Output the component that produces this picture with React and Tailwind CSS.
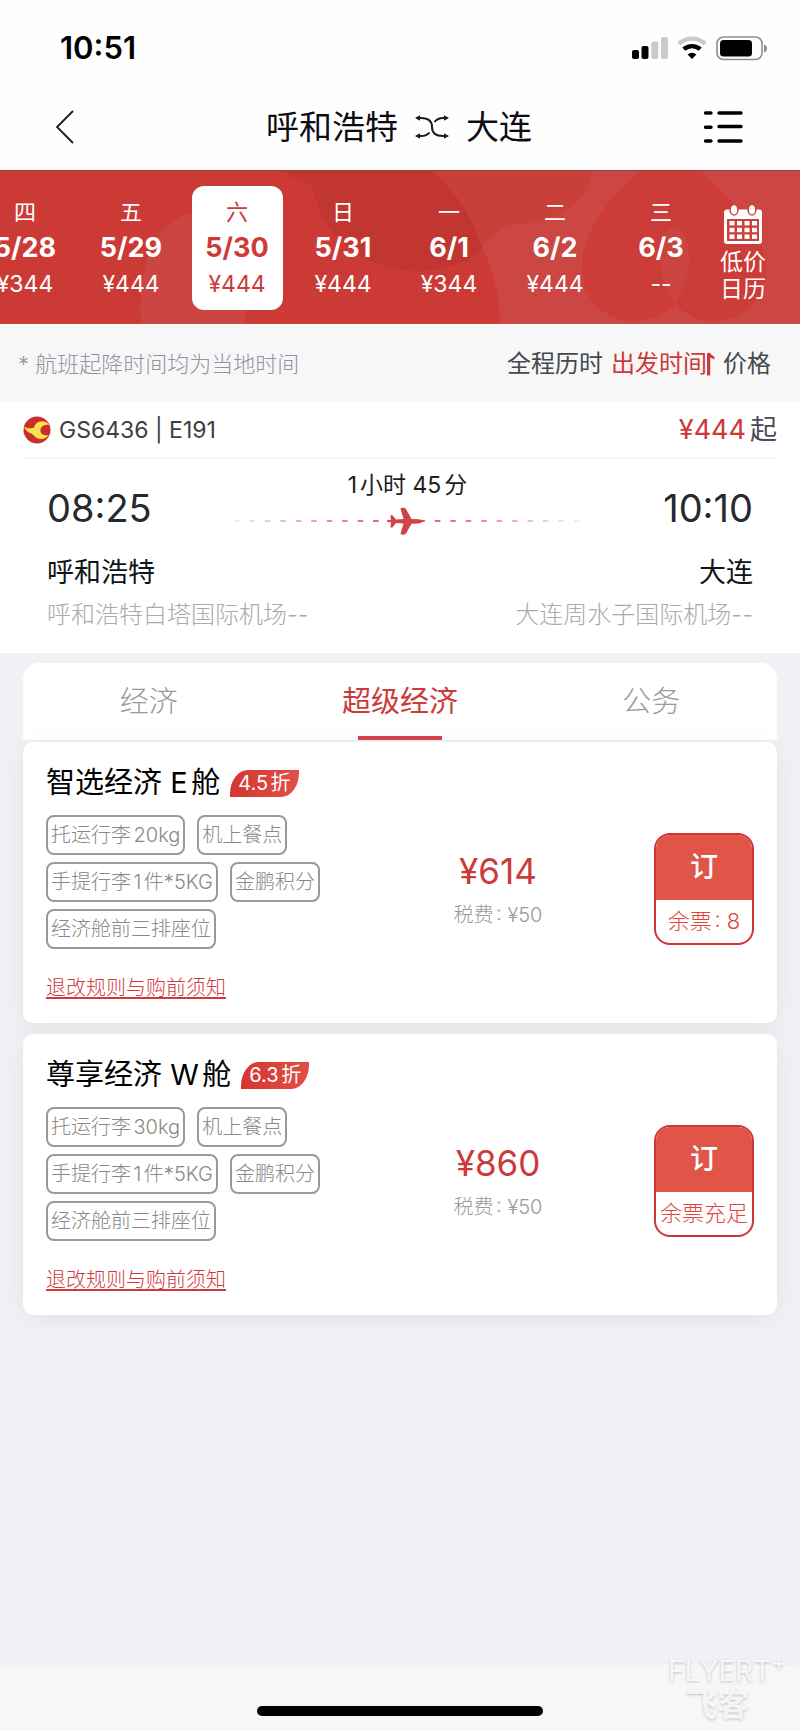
import { useState } from "react";

const days = [
  { week: "四", date: "5/28", price: "¥344" },
  { week: "五", date: "5/29", price: "¥444" },
  { week: "六", date: "5/30", price: "¥444" },
  { week: "日", date: "5/31", price: "¥444" },
  { week: "一", date: "6/1", price: "¥344" },
  { week: "二", date: "6/2", price: "¥444" },
  { week: "三", date: "6/3", price: "--" },
];

const cabins = ["经济", "超级经济", "公务"];

const fares = [
  {
    name: "智选经济 E舱",
    discount: "4.5折",
    tags: ["托运行李20kg", "机上餐点", "手提行李1件*5KG", "金鹏积分", "经济舱前三排座位"],
    price: "¥614",
    tax: "¥50",
    stock: "余票: 8",
  },
  {
    name: "尊享经济 W舱",
    discount: "6.3折",
    tags: ["托运行李30kg", "机上餐点", "手提行李1件*5KG", "金鹏积分", "经济舱前三排座位"],
    price: "¥860",
    tax: "¥50",
    stock: "余票充足",
  },
];

function StatusBar() {
  return (
    <div className="h-24 pl-[60px] pr-8 flex items-center justify-between">
      <span className="text-[31px] leading-9 font-semibold text-black">10:51</span>
      <div className="flex items-center gap-[9px]">
        <svg width="36" height="24" viewBox="0 0 36 24">
          <rect x="0" y="14" width="7" height="9" rx="2" fill="#000" />
          <rect x="9.5" y="10" width="7" height="13" rx="2" fill="#000" />
          <rect x="19.3" y="5.5" width="7" height="17.5" rx="2" fill="#cacaca" />
          <rect x="29" y="1" width="7" height="22" rx="2" fill="#cacaca" />
        </svg>
        <svg width="30" height="24" viewBox="0 0 30 24">
          <path d="M1.8 7.8A19.5 19.5 0 0 1 28.2 7.8" fill="none" stroke="#cacaca" strokeWidth="4.4" />
          <path d="M6.8 13.2A12.4 12.4 0 0 1 23.2 13.2" fill="none" stroke="#000" strokeWidth="4.4" />
          <path d="M15 23L10.6 18.4A6.8 6.8 0 0 1 19.4 18.4Z" fill="#000" />
        </svg>
        <svg width="52" height="26" viewBox="0 0 52 26">
          <rect x="1" y="2" width="45" height="22.5" rx="6.5" fill="none" stroke="#8e8e8e" strokeWidth="1.6" />
          <rect x="4" y="5" width="32" height="16.5" rx="3.5" fill="#000" />
          <path d="M48 9.5c4 1 4 7 0 8z" fill="#8e8e8e" />
        </svg>
      </div>
    </div>
  );
}

function NavBar() {
  return (
    <header className="grid grid-cols-[1fr_auto_1fr] items-center gap-4 h-[74px] pb-3 pl-[55px] pr-[57px]">
      <button aria-label="返回" className="justify-self-start">
        <svg width="19" height="34" viewBox="0 0 19 34" fill="none" stroke="#1b1b1f" strokeWidth="1.8">
          <path d="M18 1L2 17L18 33" />
        </svg>
      </button>
      <h1 className="flex items-center gap-4 text-[33px] leading-10 font-normal text-[#0c0c12]">
        呼和浩特
        <svg width="36" height="26" viewBox="0 0 36 26" fill="none" stroke="#1b1b1f" strokeWidth="2">
          <path d="M4 4H7C15 4 18 8 18 13C18 18 21 22 29 22H32" />
          <path d="M20.5 8C22.5 5.5 25 4 29 4H32" />
          <path d="M4 22H7C11 22 13.5 21 15.5 18.5" />
          <path d="M1 4L6 1.2V6.8ZM35 4L30 1.2V6.8ZM1 22L6 19.2V24.8ZM35 22L30 19.2V24.8Z" fill="#1b1b1f" stroke="none" />
        </svg>
        大连
      </h1>
      <button aria-label="菜单" className="justify-self-end">
        <svg width="40" height="34" viewBox="0 0 40 34" stroke="#000" strokeWidth="3.4" strokeLinecap="round">
          <path d="M2.5 3H8M16 3H38M2.5 17.2H8M16 16.5H38M2.5 31H8M16 31H38" />
        </svg>
      </button>
    </header>
  );
}

function CalendarIcon() {
  return (
    <svg width="40" height="40" viewBox="0 0 40 40">
      <rect x="1" y="4.5" width="38" height="34.5" rx="3" fill="#fff" />
      <rect x="4" y="14" width="32" height="22" fill="#cc413e" />
      <ellipse cx="11" cy="5" rx="4.6" ry="5.8" fill="#cc413e" />
      <ellipse cx="29" cy="5" rx="4.6" ry="5.8" fill="#cc413e" />
      <ellipse cx="11" cy="4.8" rx="3.1" ry="4.6" fill="#fff" />
      <ellipse cx="29" cy="4.8" rx="3.1" ry="4.6" fill="#fff" />
      <g fill="#fff">
        {[16, 22.8, 29.5].map((y) =>
          [6.5, 14, 21.5, 29].map((x) => (
            <rect key={`${x}-${y}`} x={x} y={y} width="5" height="4.4" />
          ))
        )}
      </g>
    </svg>
  );
}

function DateStrip() {
  const [selected, setSelected] = useState("5/30");

  return (
    <section className="relative h-[154px] bg-[#cc3a36] border-t border-[#96403c] overflow-hidden text-white">
      <svg className="absolute inset-0 w-full h-full" viewBox="0 0 800 154" preserveAspectRatio="none">
        <path d="M141 154C138 110 148 48 195 42C235 40 247 100 245 154Z" fill="#cb4542" />
        <path d="M433 0C470 40 500 100 500 154H800V0Z" fill="#cc4643" />
        <path d="M283 0C292 7 302 11 312 14C318 50 350 101 420 101C470 99 485 66 508 54C545 54 588 40 591 0Z" fill="#c93f39" />
        <path d="M283 0C292 7 302 11 312 14C318 50 350 101 420 101C450 99 468 92 482 78C475 50 455 20 433 0Z" fill="#c23631" />
        <path d="M640 0C610 25 582 62 582 98C582 128 603 150 632 151C652 151 667 143 675 133C684 144 698 151 715 151C744 150 766 130 766 98C764 58 728 25 700 0Z" fill="#cc3c38" />
        <path d="M675 133C655 105 655 60 675 56C693 60 695 105 675 133Z" fill="#cc4441" />
      </svg>
      <div className="relative h-full flex items-center">
        <div className="flex-1 flex -ml-7">
          {days.map((day) => (
            <div key={day.date} className="flex-1 flex justify-center">
              <button
                onClick={() => setSelected(day.date)}
                className={`w-[91px] h-[124px] shrink-0 rounded-xl flex flex-col items-center justify-center ${
                  selected === day.date ? "bg-white text-[#cc3a3a]" : ""
                }`}
              >
                <span className="text-[22px] leading-9">{day.week}</span>
                <span className="text-[27px] leading-9 font-bold">{day.date}</span>
                <span className="text-[23px] leading-9">{day.price}</span>
              </button>
            </div>
          ))}
        </div>
        <button className="w-[58px] mr-7 pt-3 flex flex-col items-center gap-1">
          <CalendarIcon />
          <span className="text-[23px] leading-[27px]">
            低价
            <br />
            日历
          </span>
        </button>
      </div>
    </section>
  );
}

function SortBar() {
  return (
    <section className="h-[78px] pl-[18px] pr-[29px] flex items-center justify-between bg-[#f7f7f7] border-t border-white">
      <p className="text-[22px] leading-8 font-light text-[#8f93a3]">* 航班起降时间均为当地时间</p>
      <div className="flex items-center gap-2 text-2xl leading-8 text-[#45494d]">
        <button>全程历时</button>
        <button className="flex items-center text-[#cc3a3a]">
          出发时间
          <svg width="8" height="24" viewBox="0 0 8 24" fill="#cc3a3a">
            <path d="M0 1.5L2 0.5L7.5 5V7.5L3.2 5.5V23.5H0Z" />
          </svg>
        </button>
        <button>价格</button>
      </div>
    </section>
  );
}

function AirlineLogo() {
  return (
    <svg width="28" height="28" viewBox="0 0 28 28">
      <circle cx="14" cy="14" r="13.5" fill="#c8302c" />
      <path
        d="M1 10.5C4 12.5 8 13 11 11.5C12 8 15 5.2 19 5.2C22 5.2 25 6.5 26.3 9C24.5 8.3 22 8.8 20.3 9.8C18.3 11 17.5 13 18 15.3C18.8 18.5 22.5 20.3 26 19C23.5 22 20 23.4 16.5 22.8C12.5 22 11 19.5 8.5 17.5C6.5 17 3 15.5 1 10.5Z"
        fill="#fbe04f"
      />
      <circle cx="22" cy="14.4" r="4.6" fill="#c8302c" />
    </svg>
  );
}

function FlightPath() {
  return (
    <svg width="346" height="28" viewBox="0 0 346 28" className="block">
      <defs>
        <linearGradient id="fade" x1="0" x2="346" y1="0" y2="0" gradientUnits="userSpaceOnUse">
          <stop offset="0" stopColor="#d8393c" stopOpacity="0.15" />
          <stop offset="0.4" stopColor="#d8393c" />
          <stop offset="0.6" stopColor="#d8393c" />
          <stop offset="1" stopColor="#d8393c" stopOpacity="0.12" />
        </linearGradient>
      </defs>
      <path d="M0 14H346" stroke="url(#fade)" strokeWidth="1.6" strokeDasharray="5.5 9.95" />
      <path
        d="M153 13.2L157 13L156.4 8.2H158.4L162 12.4L169.5 12L166.5 1.8C167 0.4 171 0.4 172 2L177.5 12L184.5 12.2C187 12.5 188 13 189.5 13.6L189.5 14.6C188 15.4 186.5 16.4 184.5 16.6L177.5 16.8L172 26.4C171 28 167 28 166.5 26.6L169.5 16.6L162 16L158.4 20.4H156.4L157 15.2L153 14.8Z"
        fill="#d14345"
      />
    </svg>
  );
}

function FlightSummary() {
  return (
    <section className="bg-white px-[23px]">
      <div className="h-[57px] flex items-center justify-between border-b-2 border-[#f5f5f6]">
        <div className="flex items-center gap-2 text-[23px] leading-8 text-[#3c4043]">
          <AirlineLogo />
          GS6436 | E191
        </div>
        <p className="flex items-center gap-1 text-[27px] leading-8 text-[#cf3838]">
          ¥444 <span className="text-[#4b4b57]">起</span>
        </p>
      </div>
      <div className="px-6 pb-[22px]">
        <div className="h-[98px] flex items-center justify-between text-[38px] leading-[48px] text-[#26292e]">
          <time>08:25</time>
          <div className="self-start pt-2 flex flex-col items-center gap-1">
            <span className="text-[23px] leading-9 text-[#1d2024]">1小时 45分</span>
            <FlightPath />
          </div>
          <time>10:10</time>
        </div>
        <div className="flex justify-between text-[27px] leading-8 text-[#111417]">
          <span>呼和浩特</span>
          <span>大连</span>
        </div>
        <div className="mt-2.5 flex justify-between text-2xl leading-8 font-light text-[#aaaaaa]">
          <span>呼和浩特白塔国际机场--</span>
          <span>大连周水子国际机场--</span>
        </div>
      </div>
    </section>
  );
}

function FareCard({ fare }) {
  return (
    <article className="bg-white rounded-[10px] shadow-[0_4px_24px_rgba(0,0,0,0.06)] px-[23px] py-[21px] flex">
      <div className="w-[296px] shrink-0">
        <div className="flex items-center gap-2.5 whitespace-nowrap">
          <h2 className="text-[29px] leading-10 text-black">{fare.name}</h2>
          <span className="h-[27px] px-2 rounded-tl-[18px_24px] rounded-br-[18px_24px] bg-linear-to-r from-[#d63430] to-[#df5046] text-white text-[20px] leading-[27px]">
            {fare.discount}
          </span>
        </div>
        <ul className="mt-3 flex flex-wrap gap-x-3 gap-y-[7px]">
          {fare.tags.map((tag) => (
            <li
              key={tag}
              className="h-10 px-[3px] flex items-center rounded-lg border-2 border-[#999999] text-[20px] leading-7 font-light text-[#888888]"
            >
              {tag}
            </li>
          ))}
        </ul>
        <a
          href="#rules"
          className="mt-[25px] block w-fit text-[20px] leading-7 font-light text-[#d0383a] underline underline-offset-2"
        >
          退改规则与购前须知
        </a>
      </div>
      <div className="flex-1 flex items-center pt-3">
        <div className="flex-1 text-center">
          <p className="text-[35px] leading-11 text-[#cc3a3a]">{fare.price}</p>
          <p className="mt-2 text-[20px] leading-7 font-light text-[#999999]">税费: {fare.tax}</p>
        </div>
        <button className="w-[100px] h-28 rounded-2xl border-2 border-[#cf3535] overflow-hidden flex flex-col bg-white">
          <span className="h-[65px] w-full bg-[#e15448] text-white text-[28px] leading-[65px] font-medium">订</span>
          <span className="w-full text-[22px] leading-[43px] font-light text-[#e0453c]">{fare.stock}</span>
        </button>
      </div>
    </article>
  );
}

function App() {
  const [cabin, setCabin] = useState("超级经济");

  return (
    <div
      lang="zh-CN"
      className="min-h-screen flex flex-col bg-[#f0f0f5] font-[Inter,'Noto_Sans_CJK_SC',sans-serif] [text-autospace:normal]"
    >
      <div className="bg-[#fefefe]">
        <StatusBar />
        <NavBar />
      </div>
      <DateStrip />
      <SortBar />
      <FlightSummary />

      <main className="flex-1 px-[23px] pt-2.5">
        <div className="h-[77px] grid grid-cols-3 bg-white rounded-t-2xl">
          {cabins.map((name) => (
            <button
              key={name}
              onClick={() => setCabin(name)}
              className={`relative text-[29px] leading-10 ${
                cabin === name ? "text-[#cc3a3a]" : "font-light text-[#999999]"
              }`}
            >
              {name}
              {cabin === name && (
                <span className="absolute bottom-0 inset-x-0 mx-auto w-[84px] h-1 bg-[#cf4447]" />
              )}
            </button>
          ))}
        </div>
        <div className="mt-0.5 space-y-[11px]">
          {fares.map((fare) => (
            <FareCard key={fare.name} fare={fare} />
          ))}
        </div>
      </main>

      <footer className="relative h-[66px] bg-[#f7f7f7] flex justify-center items-end pb-[15px]">
        <div className="w-[286px] h-2.5 rounded-full bg-black" />
        <div className="absolute right-3.5 bottom-2.5 flex flex-col items-center text-white/80 [text-shadow:0_1px_3px_rgba(0,0,0,0.22)]">
          <span className="text-[28px] leading-9">
            FLYERT<sup className="text-[22px]">+</sup>
          </span>
          <span className="mr-5 text-[32px] leading-8 font-bold">飞客</span>
        </div>
      </footer>
    </div>
  );
}

export default App;
